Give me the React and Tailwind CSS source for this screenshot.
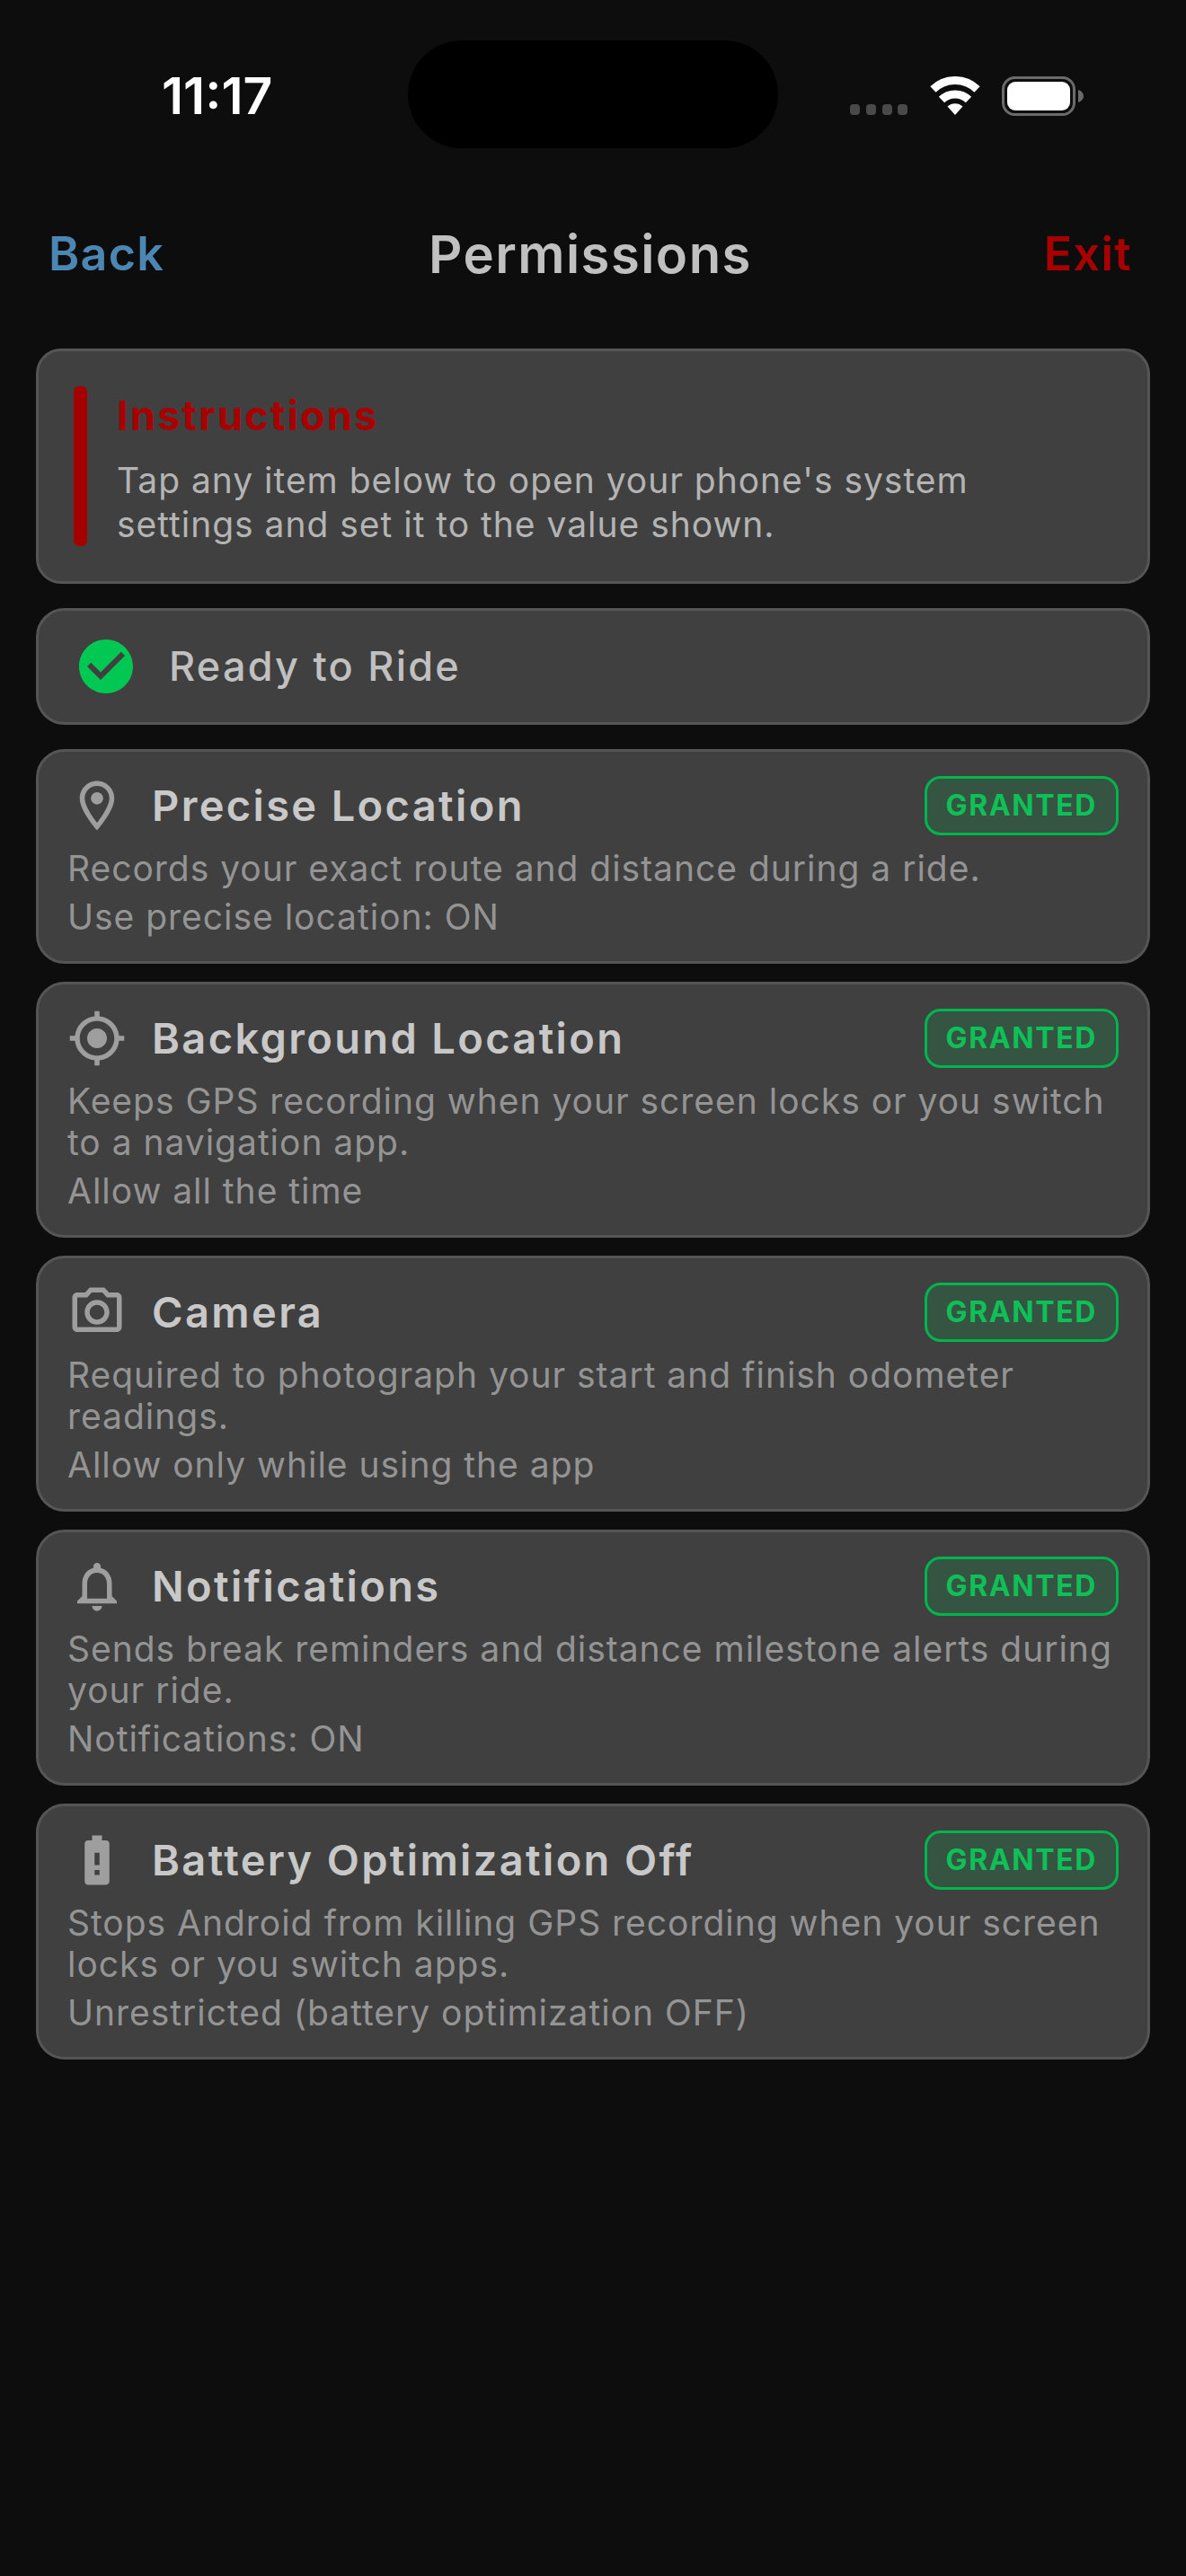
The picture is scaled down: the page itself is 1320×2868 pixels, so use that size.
import React from 'react';
import {
  MdBatteryAlert,
  MdCheckCircle,
  MdMyLocation,
  MdNotificationsNone,
  MdOutlineLocationOn,
  MdOutlinePhotoCamera,
} from 'react-icons/md';

const permissions = [
  {
    title: 'Precise Location',
    icon: MdOutlineLocationOn,
    description: 'Records your exact route and distance during a ride.',
    setting: 'Use precise location: ON',
    status: 'GRANTED',
  },
  {
    title: 'Background Location',
    icon: MdMyLocation,
    description: 'Keeps GPS recording when your screen locks or you switch to a navigation app.',
    setting: 'Allow all the time',
    status: 'GRANTED',
  },
  {
    title: 'Camera',
    icon: MdOutlinePhotoCamera,
    description: 'Required to photograph your start and finish odometer readings.',
    setting: 'Allow only while using the app',
    status: 'GRANTED',
  },
  {
    title: 'Notifications',
    icon: MdNotificationsNone,
    description: 'Sends break reminders and distance milestone alerts during your ride.',
    setting: 'Notifications: ON',
    status: 'GRANTED',
  },
  {
    title: 'Battery Optimization Off',
    icon: MdBatteryAlert,
    description: 'Stops Android from killing GPS recording when your screen locks or you switch apps.',
    setting: 'Unrestricted (battery optimization OFF)',
    status: 'GRANTED',
  },
];

function StatusBar() {
  return (
    <div className="grid grid-cols-[1fr_auto_1fr] items-center pt-[45px]">
      <div className="pt-1 pl-[180px] text-[57px] leading-[60px] font-semibold text-white">11:17</div>
      <div className="h-[120px] w-[412px] rounded-full bg-black"></div>
      <div className="flex items-center justify-end pt-1 pr-[114px]">
        <svg className="h-11 w-[65px]" viewBox="0 0 65 44" fill="#4a4a4a">
          <rect x="0" y="31" width="11" height="12" rx="4" />
          <rect x="18" y="31" width="11" height="12" rx="4" />
          <rect x="36" y="31" width="11" height="12" rx="4" />
          <rect x="53" y="31" width="11" height="12" rx="4" />
        </svg>
        <svg className="ml-6 h-11 w-14" viewBox="0 0 56 44" fill="none" stroke="#fff" strokeWidth="9">
          <path d="M3.500 14.500a35 35 0 0 1 49 0" />
          <path d="M13 26a21.500 21.500 0 0 1 30 0" />
          <path d="M28 43l-8.500-9.500a12.500 12.500 0 0 1 17 0z" fill="#fff" stroke="none" />
        </svg>
        <svg className="ml-6 h-11 w-[91px]" viewBox="0 0 91 44" fill="none">
          <rect x="1.500" y="1.500" width="79" height="41" rx="13" stroke="#6b6b6b" strokeWidth="3" />
          <rect x="6" y="6" width="70" height="32" rx="9" fill="#fff" />
          <path d="M85 15c4 1.500 6 4 6 7s-2 5.500-6 7z" fill="#6b6b6b" />
        </svg>
      </div>
    </div>
  );
}

function PermissionCard({ permission }) {
  const Icon = permission.icon;

  return (
    <button
      type="button"
      className="block w-full rounded-[32px] border-3 border-[#555555] bg-[#404040] px-8 pt-[27px] pb-[26px] text-left"
    >
      <div className="flex items-center">
        <Icon size={66} className="shrink-0 text-[#9e9e9e]" />
        <span className="ml-7 flex-1 text-[47px] leading-[60px] font-semibold tracking-wider text-[#c8c8c8]">
          {permission.title}
        </span>
        <span className="rounded-[18px] border-3 border-[#00b44e] bg-[#00c853]/15 px-[21px] py-[10px] text-[32px] leading-10 font-bold tracking-wider text-[#0fbf58]">
          {permission.status}
        </span>
      </div>
      <p className="mt-[14px] text-[39px] leading-[46px] tracking-wide text-[#949494]">{permission.description}</p>
      <p className="mt-2 text-[39px] leading-[46px] tracking-wide text-[#949494]">{permission.setting}</p>
    </button>
  );
}

function App() {
  return (
    <div className="min-h-screen bg-[#0d0d0d] font-['Inter',sans-serif]">
      <StatusBar />

      {/* Header */}
      <header className="mt-[78px] grid grid-cols-[1fr_auto_1fr] items-center pr-[60px] pl-[54px]">
        <button type="button" className="justify-self-start text-[52px] leading-20 font-semibold tracking-wide text-[#4c86b2]">
          Back
        </button>
        <h1 className="text-[58px] leading-20 font-semibold tracking-wide text-[#c0c0c0]">Permissions</h1>
        <button type="button" className="justify-self-end text-[52px] leading-20 font-semibold tracking-wide text-[#a80000]">
          Exit
        </button>
      </header>

      <main className="px-10 pt-[65px]">
        {/* Instructions */}
        <section className="flex gap-[33px] rounded-[28px] border-3 border-[#555555] bg-[#404040] p-[39px]">
          <div className="w-[15px] rounded-md bg-[#a50000]"></div>
          <div className="flex-1 pt-[6px] pr-6">
            <h2 className="text-[45px] leading-[54px] font-bold tracking-wider text-[#a80000]">Instructions</h2>
            <p className="mt-5 text-[39px] leading-[49px] tracking-wide text-[#b4b4b4]">
              Tap any item below to open your phone's system settings and set it to the value shown.
            </p>
          </div>
        </section>

        {/* Overall status */}
        <section className="mt-[27px] flex items-center gap-[34px] rounded-[32px] border-3 border-[#555555] bg-[#404040] px-[39px] py-[26px]">
          <MdCheckCircle size={72} className="text-[#00c853]" />
          <h2 className="text-[45px] leading-[60px] font-medium tracking-wider text-[#c0c0c0]">Ready to Ride</h2>
        </section>

        {/* Permission list */}
        <div className="mt-[27px] flex flex-col gap-5">
          {permissions.map((permission) => (
            <PermissionCard key={permission.title} permission={permission} />
          ))}
        </div>
      </main>
    </div>
  );
}

export default App;
